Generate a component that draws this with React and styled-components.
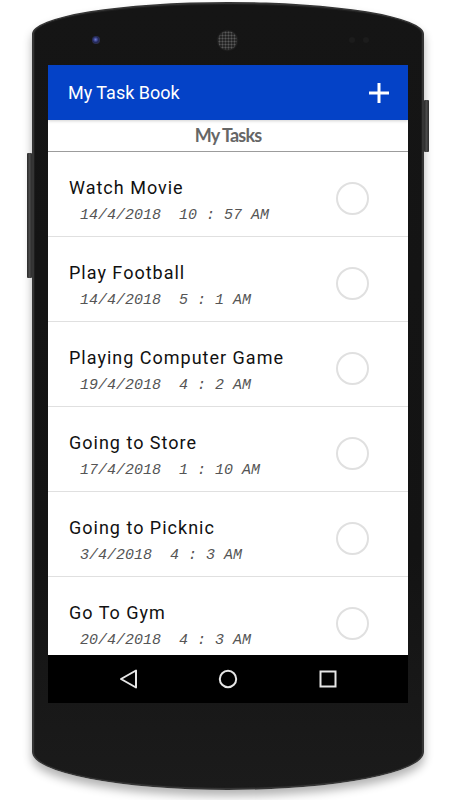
import styled, { createGlobalStyle } from 'styled-components';

const GlobalStyle = createGlobalStyle`
    * {
        box-sizing: border-box;
    }
    body {
        margin: 0;
        background-color: #ffffff;
        font-family: Roboto, 'Liberation Sans', sans-serif;
    }
`;

const Stage = styled.div`
    width: 456px;
    height: 800px;
    padding-top: 2px;
    overflow: hidden;
`;

const Phone = styled.div`
    position: relative;
    margin-left: 32px;
    width: 392px;
    height: 788px;
    padding: 0 14px;
    background: linear-gradient(180deg, #151515 0%, #131313 70%, #1b1b1b 100%);
    border: 2px solid #353535;
    border-radius: 196px 196px 196px 196px / 32px 32px 38px 38px;
    box-shadow: 0 6px 10px rgba(0, 0, 0, 0.3), inset 0 0 0 1px #1e1e1e;
`;

const SideButton = styled.div`
    position: absolute;
    top: ${(p) => p.$top}px;
    ${(p) => (p.$side === 'left' ? 'left: -7px;' : 'right: -7px;')}
    width: 5px;
    height: ${(p) => p.$height}px;
    background: linear-gradient(90deg, #2a2a2a, #4a4a4a 50%, #2c2c2c);
    border-radius: 1px;
`;

const TopBezel = styled.div`
    display: flex;
    align-items: center;
    height: 61px;
    padding-top: 11px;
`;

const Camera = styled.div`
    margin-left: 44px;
    width: 8px;
    height: 8px;
    border-radius: 50%;
    background: radial-gradient(circle at 45% 45%, #6b78d8 0, #23285a 45%, #3a3a3a 100%);
`;

const Speaker = styled.div`
    margin-left: 118px;
    width: 19px;
    height: 19px;
    border-radius: 50%;
    background-color: #262626;
    background-image: radial-gradient(circle, #5a5a5a 0.8px, transparent 1.2px);
    background-size: 3px 3px;
    box-shadow: 0 0 2px rgba(90, 90, 90, 0.6);
`;

const Sensor = styled.div`
    margin-left: ${(p) => p.$gap}px;
    width: 6px;
    height: 6px;
    border-radius: 50%;
    background-color: #1c1c1c;
`;

const Screen = styled.div`
    display: flex;
    flex-direction: column;
    width: 360px;
    height: 638px;
    background-color: #ffffff;
    overflow: hidden;
`;

const AppBar = styled.header`
    display: flex;
    justify-content: space-between;
    align-items: center;
    flex: 0 0 55px;
    padding: 0 19px 0 20px;
    background-color: #0442c7;
    color: #ffffff;
    position: relative;
    z-index: 1;
    box-shadow: 0 1px 3px rgba(0, 0, 0, 0.18);
`;

const AppTitle = styled.h1`
    margin: 0;
    font-family: Roboto, sans-serif;
    font-size: 18px;
    font-weight: 400;
`;

const AddButton = styled.button`
    display: flex;
    padding: 0;
    border: none;
    background: transparent;
    cursor: pointer;
`;

const SubHeader = styled.div`
    flex: 0 0 32px;
    border-bottom: 1px solid #9c9c9c;
    text-align: center;
    font-family: Lato, sans-serif;
    font-weight: 700;
    font-size: 18px;
    letter-spacing: -0.8px;
    line-height: 31px;
    color: #666666;
`;

const TaskList = styled.ul`
    flex: 1;
    margin: 0;
    padding: 0;
    list-style: none;
    overflow: hidden;
`;

const TaskRow = styled.li`
    display: flex;
    align-items: flex-start;
    height: 85px;
    padding: 25px 39px 0 21px;
    border-bottom: 1px solid #e0e0e0;
`;

const TaskText = styled.div`
    flex: 1;
`;

const TaskTitle = styled.div`
    font-family: Roboto, sans-serif;
    font-size: 18px;
    line-height: 22px;
    letter-spacing: 1px;
    color: #111111;
`;

const TaskDate = styled.div`
    margin-top: 8px;
    padding-left: 11px;
    font-family: 'Liberation Mono', 'DejaVu Sans Mono', monospace;
    font-style: italic;
    font-size: 15px;
    line-height: 18px;
    white-space: pre;
    color: #555555;
`;

const CheckCircle = styled.div`
    margin-top: 5px;
    width: 33px;
    height: 33px;
    border: 2px solid #e0e0e0;
    border-radius: 50%;
`;

const NavBar = styled.nav`
    display: flex;
    justify-content: center;
    align-items: center;
    gap: 76px;
    flex: 0 0 48px;
    background-color: #000000;
`;

const NavIcon = styled.svg`
    width: 24px;
    height: 24px;
    fill: none;
    stroke: #e6e6e6;
    stroke-width: 2;
`;

const tasks = [
    { title: 'Watch Movie', date: '14/4/2018  10 : 57 AM' },
    { title: 'Play Football', date: '14/4/2018  5 : 1 AM' },
    { title: 'Playing Computer Game', date: '19/4/2018  4 : 2 AM' },
    { title: 'Going to Store', date: '17/4/2018  1 : 10 AM' },
    { title: 'Going to Picknic', date: '3/4/2018  4 : 3 AM' },
    { title: 'Go To Gym', date: '20/4/2018  4 : 3 AM' },
];

const App = () => {
    return (
        <Stage>
            <GlobalStyle />
            <Phone>
                <SideButton $side="right" $top={96} $height={52} />
                <SideButton $side="left" $top={149} $height={125} />

                {/* camera, speaker and sensors */}
                <TopBezel>
                    <Camera />
                    <Speaker />
                    <Sensor $gap={112} />
                    <Sensor $gap={8} />
                </TopBezel>

                <Screen>
                    <AppBar>
                        <AppTitle>My Task Book</AppTitle>
                        <AddButton aria-label="Add task">
                            <svg width="20" height="20" viewBox="0 0 20 20">
                                <path d="M10 0v20M0 10h20" stroke="#ffffff" strokeWidth="3" />
                            </svg>
                        </AddButton>
                    </AppBar>

                    <SubHeader>My Tasks</SubHeader>

                    <TaskList>
                        {tasks.map((task) => (
                            <TaskRow key={task.title}>
                                <TaskText>
                                    <TaskTitle>{task.title}</TaskTitle>
                                    <TaskDate>{task.date}</TaskDate>
                                </TaskText>
                                <CheckCircle />
                            </TaskRow>
                        ))}
                    </TaskList>

                    {/* android soft keys */}
                    <NavBar>
                        <NavIcon viewBox="0 0 24 24">
                            <path d="M20 3.5v17L5 12z" strokeLinejoin="round" />
                        </NavIcon>
                        <NavIcon viewBox="0 0 24 24">
                            <circle cx="12" cy="12" r="8.2" />
                        </NavIcon>
                        <NavIcon viewBox="0 0 24 24">
                            <rect x="4.5" y="4.5" width="15" height="15" />
                        </NavIcon>
                    </NavBar>
                </Screen>
            </Phone>
        </Stage>
    );
};

export default App;
